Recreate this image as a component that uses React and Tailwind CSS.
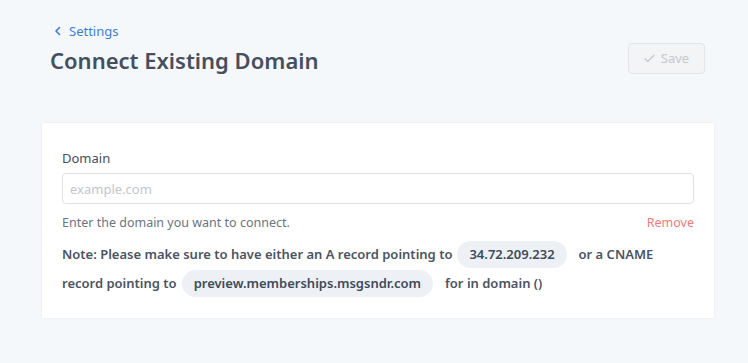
import React, { useState } from "react";

const font = { fontFamily: '"Noto Sans", "Open Sans", sans-serif' };

const Pill = ({ children }) => (
    <span className="bg-[#edf1f6] rounded-full px-3 leading-[27px] ml-[5px] mr-[12px] text-[#3f4a5a]">{children}</span>
);

const App = () => {
    const [domain, setDomain] = useState("");

    return (
        <div className="min-h-[363px] w-full bg-[#f5f8fb] pl-[42px] pr-[34px] pt-[22px]" style={font}>
            {/* header */}
            <div className="flex items-start justify-between pl-2 pr-[9px]">
                <div>
                    <a href="#" className="flex items-center gap-[7px] text-[13px] text-[#3d7fd6] leading-[18px] pl-[4px]">
                        <svg width="8" height="10" viewBox="0 0 8 10" fill="none" stroke="currentColor" strokeWidth="1.6" strokeLinecap="round" strokeLinejoin="round">
                            <path d="M5.5 1.5 2 5l3.5 3.5" />
                        </svg>
                        Settings
                    </a>
                    <h1 className="mt-[5px] text-[22px] font-semibold text-[#454f5e] leading-[30px]">Connect Existing Domain</h1>
                </div>
                <button disabled className="mt-[21px] flex items-center gap-[6px] h-[31px] w-[77px] justify-center rounded border border-[#e2e4e8] bg-[#f3f4f6] text-[13px] text-[#c4c7cc]">
                    <svg width="11" height="9" viewBox="0 0 11 9" fill="none" stroke="currentColor" strokeWidth="1.3" strokeLinecap="round" strokeLinejoin="round">
                        <path d="M1 4.8 3.8 7.5 10 1.3" />
                    </svg>
                    Save
                </button>
            </div>

            {/* card */}
            <div className="mt-[48px] bg-white shadow-[0_0_2px_rgba(0,0,0,0.08)] px-5 pt-[26px] pb-[21px]">
                <label className="block text-[13px] text-[#454f5e] leading-[18px]">Domain</label>
                <input
                    value={domain}
                    onChange={e => setDomain(e.target.value)}
                    placeholder="example.com"
                    className="mt-[6px] block w-full h-[31px] rounded border border-[#dfe1e5] px-[7px] text-[13px] text-[#454f5e] placeholder:text-[#c2c6cc] outline-none"
                />
                <div className="mt-[10px] flex items-center justify-between text-[12.5px] leading-[18px]">
                    <span className="text-[#6b7480]">Enter the domain you want to connect.</span>
                    <button className="text-[#f47a7a]">Remove</button>
                </div>
                <div className="mt-[9px] flex flex-wrap items-center gap-y-[2px] text-[13px] font-semibold text-[#4a5462] leading-[27px]">
                    <span>Note: Please make sure to have either an A record pointing to</span>
                    <Pill>34.72.209.232</Pill>
                    <span>or a CNAME</span>
                    <span>record pointing to</span>
                    <Pill>preview.memberships.msgsndr.com</Pill>
                    <span>for in domain ()</span>
                </div>
            </div>
        </div>
    );
};

export default App;
